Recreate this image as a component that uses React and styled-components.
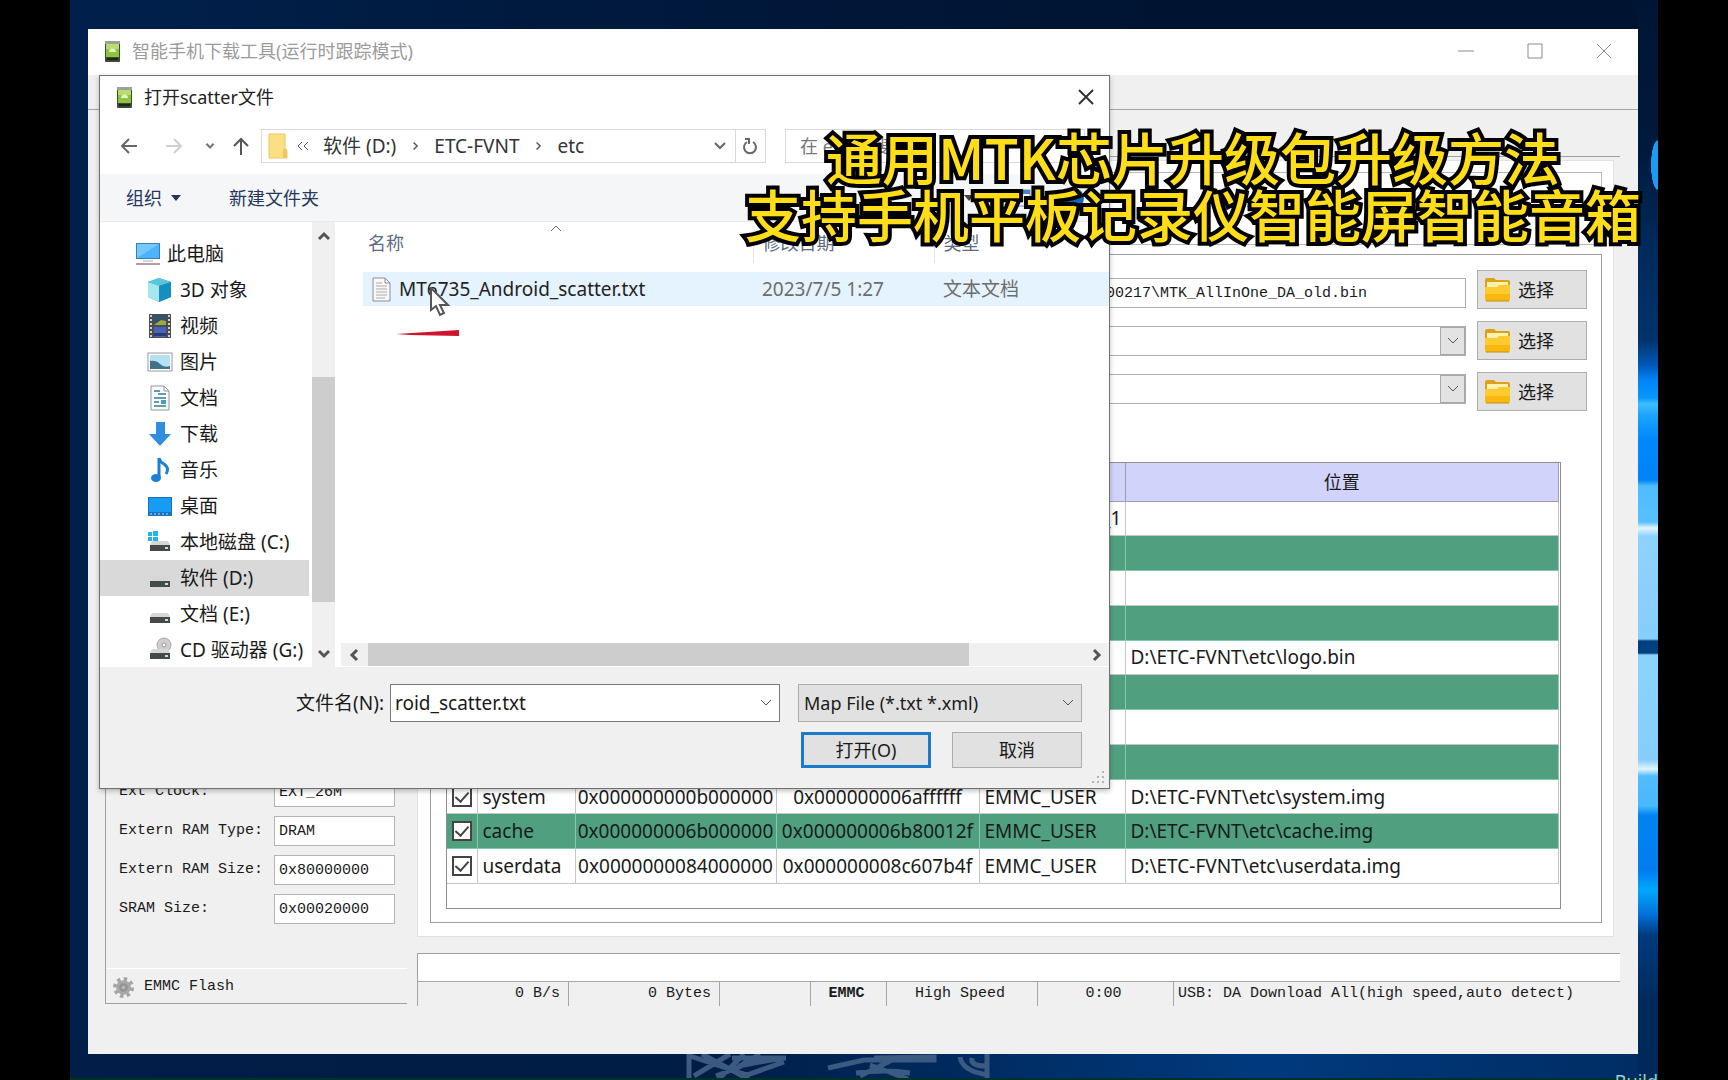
import styled, { createGlobalStyle } from "styled-components";

const GlobalStyle = createGlobalStyle`
  * {
    box-sizing: border-box;
  }
  body {
    margin: 0;
    background: #000;
    color: #1a1a1a;
    font-family: "Noto Sans", "Noto Sans CJK SC", sans-serif;
    font-size: 18px;
    line-height: 24px;
  }
  button, input, select {
    margin: 0;
    padding: 0;
    border: 0;
    border-radius: 0;
    outline: 0;
    background: none;
    color: inherit;
    font: inherit;
  }
  svg {
    display: block;
    flex: none;
  }
`;

const mono = `
  font-family: "Liberation Mono", "Noto Sans CJK SC", monospace;
  font-size: 15px;
`;

const Desktop = styled.div`
  position: relative;
  display: flex;
  height: 100vh;
  min-height: 1080px;
  margin: 0 70px;
  padding: 29px 20px 26px 18px;
  overflow: hidden;
  background:
    linear-gradient(#013226, #013226) bottom / 100% 2px no-repeat,
    radial-gradient(ellipse at right, #1a9cf4 68%, transparent 72%) right 140px / 7px 50px no-repeat,
    linear-gradient(
        #001533 0, #001a3d 150px, #002a5c 250px, #00336c 340px, #0058b8 365px,
        #0084f8 380px, #0a96ff 398px, #3cc0ff 404px, #1ca4ff 415px, #0088fb 440px,
        #0084f8 480px, #4fbcff 486px, #58c0ff 522px,
        #e4f6ff 528px, #8ed2ff 536px, #86ceff 639px, #003f82 641px, #003f82 653px,
        #8ad2ff 655px, #86ceff 760px, #e0f5ff 769px, #52bcff 776px, #48b8ff 806px,
        #0084f2 815px, #007cee 870px, #00a8ff 890px, #0070d8 915px, #003a80 935px,
        #002a5c 1000px, #00285a 1080px
      )
      right / 20px 100% no-repeat,
    linear-gradient(90deg, #021d47, #001d45 40%, #003a7e 75%, #002c62) bottom / 100% 40px no-repeat,
    linear-gradient(90deg, #00204c, #001a3e 30%, #001330 75%, #001330);
`;

const AppWindow = styled.main`
  position: relative;
  display: flex;
  flex: 1;
  flex-direction: column;
  background: #f0f0f0;
`;

const TitleBar = styled.header`
  display: flex;
  align-items: center;
  gap: 11px;
  height: ${(p) => (p.$dialog ? 44 : 46)}px;
  padding: 0 0 2px 16px;
  background: #fff;
  color: ${(p) => (p.$dialog ? "#222" : "#9b9b9b")};
`;

const TitleText = styled.h1`
  flex: 1;
  margin: 0;
  font-size: 18px;
  font-weight: 400;
`;

const CaptionButtons = styled.div`
  display: flex;
`;

const CaptionButton = styled.button`
  display: flex;
  justify-content: center;
  width: ${(p) => (p.$dialog ? 46 : 69)}px;
`;

const MenuBar = styled.div`
  height: 35px;
  border-bottom: 1px solid #a6a6a6;
`;

const Workspace = styled.div`
  display: grid;
  grid-template-columns: 302px 1fr;
  gap: 10px;
  flex: 1;
  padding: 46px 18px 50px 17px;
`;

const ChipPanel = styled.section`
  display: flex;
  flex-direction: column;
  justify-content: flex-end;
  border: solid #a0a0a0;
  border-width: 0 0 1px 1px;
  ${mono}
`;

const ChipFields = styled.div`
  display: flex;
  flex-direction: column;
  gap: 9px;
  padding: 0 12px 44px 13px;
`;

const ChipRow = styled.label`
  display: flex;
  align-items: center;
  justify-content: space-between;
  height: 30px;
`;

const ChipInput = styled.input`
  width: 121px;
  height: 30px;
  padding-left: 4px;
  border: 1px solid #b4b4b4;
  background: #fff;
`;

const FlashBar = styled.div`
  display: flex;
  align-items: center;
  gap: 10px;
  height: 35px;
  padding: 2px 0 0 7px;
  border-top: 1px solid #fff;
`;

const MainColumn = styled.div`
  display: flex;
  flex-direction: column;
  border-top: 1px solid #a0a0a0;
`;

const TabPanel = styled.section`
  display: flex;
  flex: 1;
  flex-direction: column;
  gap: 9px;
  margin: 3px 6px 16px 0;
  padding: 11px 11px 13px 12px;
  border: 1px solid #e2e2e2;
  background: #fff;
`;

const ActionGroup = styled.div`
  height: 73px;
  border: 1px solid #b8b8b8;
`;

const DownloadGroup = styled.div`
  display: flex;
  flex: 1;
  flex-direction: column;
  gap: 51px;
  padding: 15px 14px 13px 15px;
  border: 1px solid #a0a0a0;
`;

const FileFields = styled.div`
  display: flex;
  gap: 11px;
`;

const FieldColumn = styled.div`
  display: flex;
  flex: 1;
  flex-direction: column;
  gap: 18px;
  padding-top: 8px;
`;

const PathInput = styled.input`
  width: 100%;
  height: 30px;
  padding-right: 98px;
  border: 1px solid #acacac;
  text-align: right;
  ${mono}
`;

const Combo = styled.div`
  display: flex;
  align-items: center;
  height: 30px;
  border: 1px solid #acacac;

  select {
    flex: 1;
    appearance: none;
  }
`;

const ComboArrow = styled.span`
  display: flex;
  align-items: center;
  justify-content: center;
  width: 25px;
  height: 28px;
  border: 1px solid #a8a8a8;
  background: #e3e3e3;
`;

const ButtonColumn = styled.div`
  display: flex;
  flex-direction: column;
  gap: 12px;
  width: 110px;
`;

const ChooseButton = styled.button`
  display: flex;
  align-items: center;
  gap: 7px;
  height: 39px;
  padding-left: 6px;
  border: 1px solid #adadad;
  background: #e1e1e1;
`;

const TableFrame = styled.div`
  flex: 1;
  margin-right: 26px;
  padding-right: 1px;
  border: 1px solid #8e8e8e;
`;

const PartitionTable = styled.table`
  width: 100%;
  height: 421px;
  border-collapse: collapse;
  table-layout: fixed;
  font-size: 19px;
`;

const HeadCell = styled.th`
  width: ${(p) => (p.$w ? p.$w + "px" : "auto")};
  height: 38px;
  padding: 0;
  border: solid #9d9dae;
  border-width: 0 1px 1px 0;
  background: #d1d3fb;
  font-size: 18px;
  font-weight: 400;
`;

const Row = styled.tr`
  height: 34px;
  background: ${(p) => (p.$green ? "#50a080" : "#fff")};
`;

const Cell = styled.td`
  padding: ${(p) => (p.$center ? 0 : "0 0 0 5px")};
  border: solid ${(p) => (p.$green ? "#86c8ae" : "#c4c4c4")};
  border-width: 0 1px 1px 0;
  overflow: hidden;
  text-align: ${(p) => (p.$center ? "center" : "left")};
  white-space: nowrap;
`;

const Check = styled.input`
  display: block;
  width: 20px;
  height: 20px;
  margin: 0 auto;
  border: 2px solid #444;
  background: #fff;
  appearance: none;

  &:checked::after {
    content: "";
    display: block;
    width: 6px;
    height: 11px;
    margin: 0 auto;
    border: solid #444;
    border-width: 0 2px 2px 0;
    transform: rotate(42deg);
  }
`;

const ProgressBar = styled.div`
  height: 28px;
  border: solid #a0a0a0;
  border-width: 1px 0 0 1px;
  background: #fff;
`;

const StatusBar = styled.footer`
  display: grid;
  grid-template-columns: 151px 151px 91px 76px 151px 136px 1fr;
  height: 23px;
  ${mono}
`;

const StatusCell = styled.div`
  padding: 0 8px 0 4px;
  border: solid #a6a6a6;
  border-width: 1px 0 0 1px;
  text-align: ${(p) => p.$align || "center"};
  font-weight: ${(p) => (p.$bold ? 700 : 400)};
  white-space: nowrap;
`;

const Dialog = styled.section`
  position: absolute;
  top: 46px;
  left: 11px;
  width: calc(100% - 539px);
  border: 1px solid #707070;
  background: #fff;
  box-shadow: 0 2px 5px rgba(0, 0, 0, 0.25);
`;

const NavBar = styled.nav`
  display: flex;
  align-items: center;
  height: 54px;
  padding: 0 24px 2px 20px;
  color: #333;
  font-size: 19px;
`;

const NavButtons = styled.div`
  display: grid;
  grid-template-columns: 45px 40px 27px 29px;
`;

const AddressBar = styled.div`
  display: flex;
  flex: 1;
  align-items: center;
  height: 34px;
  padding-left: 6px;
  border: 1px solid #d9d9d9;
`;

const Crumbs = styled.div`
  display: flex;
  flex: 1;
  align-items: center;
  gap: 14px;
  padding-left: 9px;
`;

const RefreshButton = styled.button`
  display: flex;
  align-items: center;
  justify-content: center;
  width: 30px;
  height: 32px;
  margin-left: 8px;
  border-left: 1px solid #d9d9d9;
`;

const SearchInput = styled.input`
  width: 300px;
  height: 34px;
  margin-left: 19px;
  padding-left: 14px;
  border: 1px solid #d9d9d9;
  font-size: 18px;

  &::placeholder {
    color: #777;
    opacity: 1;
  }
`;

const Toolbar = styled.div`
  display: flex;
  align-items: center;
  height: 48px;
  padding: 0 24px 0 26px;
  border-bottom: 1px solid #eaeaea;
  background: #f5f6f7;
  color: #25375e;
`;

const ToolButton = styled.button`
  display: flex;
  align-items: center;
  gap: 9px;
  margin-right: 48px;
`;

const ViewTools = styled.div`
  display: flex;
  align-items: center;
  gap: 32px;
  margin-left: auto;
`;

const Browser = styled.div`
  display: grid;
  grid-template-columns: 212px 23px 1fr;
  height: 445px;
`;

const Tree = styled.ul`
  display: grid;
  grid-auto-rows: 36px;
  margin: 0;
  padding: 14px 3px 0 0;
  list-style: none;
  font-size: 19px;
  overflow: hidden;
`;

const TreeItem = styled.li`
  display: flex;
  align-items: center;
  gap: ${(p) => (p.$root ? 6 : 7)}px;
  padding-left: ${(p) => (p.$root ? 35 : 47)}px;
  background: ${(p) => (p.$active ? "#d9d9d9" : "transparent")};
  white-space: nowrap;
`;

const VScroll = styled.div`
  display: flex;
  flex-direction: column;
  align-items: center;
  padding: 8px 0 6px;
  background: #f0f0f0;
`;

const VThumb = styled.div`
  width: 23px;
  height: 225px;
  margin: 133px 0 auto;
  background: #cdcdcd;
`;

const FileArea = styled.div`
  display: flex;
  flex-direction: column;
  min-width: 0;
`;

const SortMark = styled.div`
  display: flex;
  justify-content: center;
  width: 442px;
  height: 9px;
`;

const FileTable = styled.table`
  width: calc(100% - 28px);
  margin: 0 0 auto 28px;
  border-collapse: collapse;
  table-layout: fixed;
  color: #6d6d6d;
  font-size: 19px;
`;

const FileHead = styled.th`
  width: ${(p) => (p.$w ? p.$w + "px" : "auto")};
  height: 30px;
  padding: 0 0 8px ${(p) => (p.$first ? 5 : 9)}px;
  border-right: ${(p) => (p.$last ? 0 : "1px solid #e5e5e5")};
  color: #5c6b83;
  font-size: 18px;
  font-weight: 400;
  text-align: left;
  vertical-align: middle;
`;

const FileCell = styled.td`
  height: 34px;
  padding: 0 0 0 9px;
  background: #e5f3ff;
  white-space: nowrap;
`;

const FileName = styled.span`
  display: flex;
  align-items: center;
  gap: 8px;
  color: #222;
`;

const TableGap = styled.tr`
  height: 9px;
`;

const HScroll = styled.div`
  display: flex;
  align-items: center;
  height: 23px;
  margin: 0 0 1px 6px;
  padding: 0 6px 0 7px;
  background: #f0f0f0;
`;

const HThumb = styled.div`
  flex: 1;
  height: 23px;
  margin: 0 120px 0 6px;
  background: #cdcdcd;
`;

const DialogFooter = styled.form`
  display: flex;
  flex-direction: column;
  gap: 10px;
  padding: 17px 27px 20px;
  background: #f0f0f0;
`;

const FooterRow = styled.div`
  display: flex;
  align-items: center;
  justify-content: flex-end;
  gap: ${(p) => p.$gap}px;
`;

const NameBox = styled.div`
  display: flex;
  align-items: center;
  width: 390px;
  height: 38px;
  margin-right: 12px;
  padding: 0 6px 0 4px;
  border: 1px solid #7a7a7a;
  background: #fff;

  input {
    flex: 1;
    min-width: 0;
    font-size: 19px;
  }
`;

const NameLabel = styled.label`
  font-size: 19px;
`;

const TypeBox = styled.div`
  display: flex;
  align-items: center;
  width: 284px;
  height: 38px;
  padding: 0 6px 0 5px;
  border: 1px solid #adadad;
  background: #e1e1e1;

  select {
    flex: 1;
    appearance: none;
  }
`;

const DialogButton = styled.button`
  width: 130px;
  height: 36px;
  border: ${(p) => (p.$primary ? "3px solid #1a79c8" : "1px solid #adadad")};
  background: #e1e1e1;
`;

const SizeGrip = styled.svg`
  position: absolute;
  right: 3px;
  bottom: 3px;
`;

const Pointer = styled.svg`
  position: absolute;
  top: 211px;
  left: 330px;
`;

const RedStroke = styled.svg`
  position: absolute;
  top: 253px;
  left: 296px;
`;

const Overlay = styled.p`
  position: absolute;
  top: 127px;
  right: 0;
  width: 930px;
  margin: 0;
  color: #ffde17;
  font-family: "Noto Sans CJK SC", sans-serif;
  font-size: 56px;
  font-weight: 500;
  line-height: 57px;
  text-align: center;
  white-space: nowrap;
  -webkit-text-stroke: 8px #000;
  paint-order: stroke fill;
  stroke-linejoin: round;
`;

const Watermark = styled.svg`
  position: absolute;
  bottom: 2px;
  left: 616px;
`;

const BuildLabel = styled.div`
  position: absolute;
  right: 0;
  bottom: -13px;
  color: #8fd0dc;
  font-size: 18px;
  line-height: 24px;
`;

const arrows = {
  down: "M2 4l5 5 5-5",
  up: "M2 9l5-5 5 5",
  left: "M9 2L4 7l5 5",
  right: "M5 2l5 5-5 5",
};

function Chevron({ dir = "down", size = 14, weight = 2, color = "#555" }) {
  return (
    <svg width={size} height={size} viewBox="0 0 14 14" fill="none" stroke={color} strokeWidth={weight}>
      <path d={arrows[dir]} />
    </svg>
  );
}

function PhoneIcon() {
  return (
    <svg width="17" height="21" viewBox="0 0 17 21">
      <rect x="1" width="15" height="21" rx="1" fill="#3c4a35" />
      <rect x="1" width="15" height="3" fill="#9aa39a" />
      <rect x="2" y="3" width="13" height="13" fill="#8cc63f" />
      <rect x="2" y="3" width="13" height="5" fill="#b7dd6e" />
      <path d="M5 11a3.500 3.500 0 0 1 7 0z" fill="#e4f5c4" />
      <rect x="3" y="17" width="11" height="2" fill="#1d241b" />
    </svg>
  );
}

function FolderIcon() {
  return (
    <svg width="27" height="26" viewBox="0 0 27 26">
      <path d="M1 3q0-2 2-2h7l2 2h12q2 0 2 2v10H1z" fill="#dda01a" />
      <path d="M3 5h21v6H3z" fill="#fff1b0" />
      <path d="M1 10h12l2-2h11v14q0 2-2 2H3q-2 0-2-2z" fill="#fdcb30" />
      <path d="M1 17h25v5q0 2-2 2H3q-2 0-2-2z" fill="#f9b80f" />
      <path d="M2 24h23" stroke="#c98f10" />
    </svg>
  );
}

function AddressFolder() {
  return (
    <svg width="20" height="26" viewBox="0 0 20 26">
      <path d="M1 1h16v15l2 2v7H1z" fill="#fbdf85" stroke="#edc75f" />
      <path d="M15 16h4v9h-4z" fill="#edc75f" />
    </svg>
  );
}

function GearIcon() {
  return (
    <svg width="21" height="21" viewBox="0 0 20 20">
      <circle cx="10" cy="10" r="8" fill="none" stroke="#a4a4a4" strokeWidth="4" strokeDasharray="3.140 3.140" />
      <circle cx="10" cy="10" r="7" fill="#a8a8a8" />
      <circle cx="10" cy="10" r="4" fill="#929292" />
      <circle cx="10" cy="10" r="2" fill="#b5b5b5" />
    </svg>
  );
}

function DocIcon() {
  return (
    <svg width="19" height="25" viewBox="0 0 19 25">
      <path d="M1 1h12l5 5v18H1z" fill="#f8f8f8" stroke="#8e8e8e" />
      <path d="M13 1v5h5" fill="none" stroke="#8e8e8e" />
      <path d="M4 6h6M4 9h11M4 12h11M4 15h11M4 18h11M4 21h9" stroke="#aaa" />
    </svg>
  );
}

const drive = (
  <>
    <path d="M5 12h16l2 4H3z" fill="#d6d6d6" />
    <path d="M3 16h20v6H3z" fill="#454a4a" />
    <path d="M18 19h3" stroke="#b9e8c9" strokeWidth="2" />
  </>
);

const treeIcons = {
  pc: (
    <>
      <rect x="1" y="2" width="24" height="16" fill="#3b7fae" />
      <rect x="2" y="3" width="22" height="14" fill="#4bb4fb" />
      <path d="M2 17L24 3H2z" fill="#74c8ff" />
      <path d="M8 20h10" stroke="#8fb4cc" />
      <path d="M1 23h24" stroke="#b89a9f" strokeWidth="2" />
    </>
  ),
  cube: (
    <>
      <path d="M1 5l11-4 12 4v15l-12 5L1 20z" fill="#25a3c9" />
      <path d="M1 5l11 3v17L1 20z" fill="#a5e6ef" />
      <path d="M1 5l11-4 12 4-12 4z" fill="#59c6dd" />
      <path d="M12 9l12-4v15l-12 5z" fill="#148fc0" />
    </>
  ),
  video: (
    <>
      <rect x="2" y="1" width="22" height="24" fill="#4c4c4c" />
      <path d="M4 2v22M22 2v22" stroke="#d0d0d0" strokeWidth="2" strokeDasharray="2 2" />
      <rect x="7" y="2" width="12" height="10" fill="#36506e" />
      <path d="M7 12l7-5 5 1v4z" fill="#a0a843" />
      <rect x="7" y="14" width="12" height="10" fill="#4565b6" />
      <path d="M7 20h12v3H7z" fill="#283a7a" />
    </>
  ),
  picture: (
    <>
      <rect x="1" y="4" width="24" height="18" fill="#fff" stroke="#9a9a9a" />
      <rect x="3" y="6" width="20" height="14" fill="#b7e0f5" />
      <path d="M3 12q6-1 10 3t10 2v3H3z" fill="#3f7389" />
    </>
  ),
  doc: (
    <>
      <path d="M4 1h13l5 5v19H4z" fill="#fafafa" stroke="#8b9a9f" />
      <path d="M17 1v5h5" fill="none" stroke="#8b9a9f" />
      <path d="M7 6h6M11 9h8M7 13h12M7 17h5M7 21h12" stroke="#5da1af" strokeWidth="2" />
      <path d="M14 15h5v4h-5z" fill="#4d9bb6" />
    </>
  ),
  download: <path d="M9 1h9v12h6L13 25 2 13h7z" fill="#318de0" />,
  music: (
    <>
      <ellipse cx="9" cy="21" rx="5" ry="4" fill="#1d7fd6" />
      <path d="M12 21V1q1 4 5 6 6 4 2 10" fill="none" stroke="#1d7fd6" strokeWidth="3" />
    </>
  ),
  desktop: (
    <>
      <rect x="1" y="4" width="24" height="19" fill="#1774bd" />
      <rect x="2" y="5" width="22" height="14" fill="#169cf5" />
      <path d="M3 21h20" stroke="#b8dcf3" strokeDasharray="2 2" />
    </>
  ),
  system: (
    <>
      <path d="M1 3h4v4H1zM6 2h5v5H6zM1 8h4v4H1zM6 8h5v5H6z" fill="#22b4e6" />
      {drive}
    </>
  ),
  drive,
  cd: (
    <>
      <circle cx="17" cy="8" r="7" fill="#cfcfcf" stroke="#a9a9a9" />
      <circle cx="17" cy="8" r="2" fill="#fff" stroke="#999" />
      {drive}
    </>
  ),
};

const treeItems = [
  { icon: "pc", label: "此电脑" },
  { icon: "cube", label: "3D 对象" },
  { icon: "video", label: "视频" },
  { icon: "picture", label: "图片" },
  { icon: "doc", label: "文档" },
  { icon: "download", label: "下载" },
  { icon: "music", label: "音乐" },
  { icon: "desktop", label: "桌面" },
  { icon: "system", label: "本地磁盘 (C:)" },
  { icon: "drive", label: "软件 (D:)", active: true },
  { icon: "drive", label: "文档 (E:)" },
  { icon: "cd", label: "CD 驱动器 (G:)" },
];

const partitions = [
  { region: "EMMC_BOOT_1" },
  {},
  {},
  {},
  { path: "D:\\ETC-FVNT\\etc\\logo.bin" },
  {},
  {},
  {},
  {
    name: "system",
    begin: "0x000000000b000000",
    end: "0x000000006affffff",
    region: "EMMC_USER",
    path: "D:\\ETC-FVNT\\etc\\system.img",
  },
  {
    name: "cache",
    begin: "0x000000006b000000",
    end: "0x000000006b80012f",
    region: "EMMC_USER",
    path: "D:\\ETC-FVNT\\etc\\cache.img",
  },
  {
    name: "userdata",
    begin: "0x0000000084000000",
    end: "0x000000008c607b4f",
    region: "EMMC_USER",
    path: "D:\\ETC-FVNT\\etc\\userdata.img",
  },
];

const chipInfo = [
  ["Ext Clock:", "EXT_26M"],
  ["Extern RAM Type:", "DRAM"],
  ["Extern RAM Size:", "0x80000000"],
  ["SRAM Size:", "0x00020000"],
];

const windowButtons = [
  ["最小化", "M0 8h16"],
  ["最大化", "M1 1h14v14H1z"],
  ["关闭", "M1 1l14 14M15 1L1 15"],
];

function Partitions() {
  return (
    <TableFrame>
      <PartitionTable>
        <thead>
          <tr>
            <HeadCell $w={30} />
            <HeadCell $w={98} />
            <HeadCell $w={201} />
            <HeadCell $w={203} />
            <HeadCell $w={146} />
            <HeadCell>位置</HeadCell>
          </tr>
        </thead>
        <tbody>
          {partitions.map((p, i) => {
            const green = i % 2 === 1;
            return (
              <Row key={i} $green={green}>
                <Cell $green={green} $center>
                  {p.name && <Check type="checkbox" aria-label={p.name} defaultChecked />}
                </Cell>
                <Cell $green={green}>{p.name}</Cell>
                <Cell $green={green} $center>{p.begin}</Cell>
                <Cell $green={green} $center>{p.end}</Cell>
                <Cell $green={green}>{p.region}</Cell>
                <Cell $green={green}>{p.path}</Cell>
              </Row>
            );
          })}
        </tbody>
      </PartitionTable>
    </TableFrame>
  );
}

function OpenDialog() {
  return (
    <Dialog role="dialog" aria-label="打开scatter文件">
      <TitleBar $dialog>
        <PhoneIcon />
        <TitleText as="h2">打开scatter文件</TitleText>
        <CaptionButton $dialog aria-label="关闭">
          <svg width="16" height="16" viewBox="0 0 16 16" stroke="#333" strokeWidth="2">
            <path d="M1 1l14 14M15 1L1 15" />
          </svg>
        </CaptionButton>
      </TitleBar>
      <NavBar>
        <NavButtons>
          <button aria-label="后退">
            <svg width="18" height="18" viewBox="0 0 18 18" fill="none" stroke="#666" strokeWidth="2">
              <path d="M17 9H2M9 2L2 9l7 7" />
            </svg>
          </button>
          <button aria-label="前进">
            <svg width="18" height="18" viewBox="0 0 18 18" fill="none" stroke="#d0d0d0" strokeWidth="2">
              <path d="M1 9h15M9 2l7 7-7 7" />
            </svg>
          </button>
          <button aria-label="最近位置">
            <Chevron size={10} weight={3} color="#777" />
          </button>
          <button aria-label="上移">
            <svg width="18" height="18" viewBox="0 0 18 18" fill="none" stroke="#555" strokeWidth="2">
              <path d="M9 18V2M2 9l7-7 7 7" />
            </svg>
          </button>
        </NavButtons>
        <AddressBar>
          <AddressFolder />
          <Crumbs>
            <svg width="12" height="10" viewBox="0 0 12 10" fill="none" stroke="#555">
              <path d="M5 1L1 5l4 4M11 1L7 5l4 4" />
            </svg>
            <button>软件 (D:)</button>
            <Chevron dir="right" size={10} weight={2} color="#555" />
            <button>ETC-FVNT</button>
            <Chevron dir="right" size={10} weight={2} color="#555" />
            <button>etc</button>
          </Crumbs>
          <Chevron color="#666" />
          <RefreshButton aria-label="刷新">
            <svg width="17" height="18" viewBox="0 0 17 18" fill="none" stroke="#666" strokeWidth="2">
              <path d="M11 5a6 6 0 1 1-6 0" />
              <path d="M3 2h4v5" />
            </svg>
          </RefreshButton>
        </AddressBar>
        <SearchInput aria-label="搜索" placeholder="在 etc 中搜索" />
      </NavBar>
      <Toolbar>
        <ToolButton>
          组织
          <svg width="10" height="6" viewBox="0 0 10 6">
            <path d="M0 0h10L5 6z" fill="#25375e" />
          </svg>
        </ToolButton>
        <ToolButton>新建文件夹</ToolButton>
        <ViewTools>
          <svg width="10" height="6" viewBox="0 0 10 6">
            <path d="M0 0h10L5 6z" fill="#444" />
          </svg>
          <svg width="25" height="18" viewBox="0 0 25 18">
            <rect x="1" y="1" width="23" height="16" fill="#fff" stroke="#6b8fb5" />
            <path d="M1 1h23v4H1z" fill="#4b84c4" />
          </svg>
          <svg width="22" height="22" viewBox="0 0 22 22">
            <circle cx="11" cy="11" r="10" fill="#1467b8" />
          </svg>
        </ViewTools>
      </Toolbar>
      <Browser>
        <Tree>
          {treeItems.map((item) => (
            <TreeItem key={item.label} $root={item.icon === "pc"} $active={item.active}>
              <svg width="26" height="26" viewBox="0 0 26 26">
                {treeIcons[item.icon]}
              </svg>
              {item.label}
            </TreeItem>
          ))}
        </Tree>
        <VScroll>
          <Chevron dir="up" weight={3} />
          <VThumb />
          <Chevron weight={3} />
        </VScroll>
        <FileArea>
          <SortMark>
            <Chevron dir="up" weight={1} color="#666" />
          </SortMark>
          <FileTable>
            <thead>
              <tr>
                <FileHead $w={390} $first>名称</FileHead>
                <FileHead $w={181}>修改日期</FileHead>
                <FileHead $last>类型</FileHead>
              </tr>
            </thead>
            <tbody>
              <TableGap />
              <tr>
                <FileCell>
                  <FileName>
                    <DocIcon />
                    MT6735_Android_scatter.txt
                  </FileName>
                </FileCell>
                <FileCell>2023/7/5 1:27</FileCell>
                <FileCell>文本文档</FileCell>
              </tr>
            </tbody>
          </FileTable>
          <HScroll>
            <Chevron dir="left" weight={3} />
            <HThumb />
            <Chevron dir="right" weight={3} />
          </HScroll>
        </FileArea>
      </Browser>
      <DialogFooter>
        <FooterRow $gap={6}>
          <NameLabel htmlFor="file-name">文件名(N):</NameLabel>
          <NameBox>
            <input id="file-name" defaultValue="roid_scatter.txt" />
            <Chevron weight={1} />
          </NameBox>
          <TypeBox>
            <select aria-label="文件类型">
              <option>Map File (*.txt *.xml)</option>
            </select>
            <Chevron weight={1} />
          </TypeBox>
        </FooterRow>
        <FooterRow $gap={21}>
          <DialogButton type="button" $primary>打开(O)</DialogButton>
          <DialogButton type="button">取消</DialogButton>
        </FooterRow>
      </DialogFooter>
      <SizeGrip width="14" height="14" viewBox="0 0 14 14" fill="#b5b5b5">
        <path d="M10 0h2v2h-2zM5 5h2v2H5zM10 5h2v2h-2zM0 10h2v2H0zM5 10h2v2H5zM10 10h2v2h-2z" />
      </SizeGrip>
      <Pointer width="20" height="30" viewBox="0 0 20 30">
        <path d="M1 1v22l5-4 4 9 4-2-4-8h8z" fill="#fff" stroke="#555" strokeWidth="2" />
      </Pointer>
      <RedStroke width="64" height="8" viewBox="0 0 64 8">
        <path d="M0 5L63 1v6L14 6z" fill="#cf1430" />
      </RedStroke>
    </Dialog>
  );
}

export default function App() {
  return (
    <>
      <GlobalStyle />
      <Desktop>
        <AppWindow>
          <TitleBar>
            <PhoneIcon />
            <TitleText>智能手机下载工具(运行时跟踪模式)</TitleText>
            <CaptionButtons>
              {windowButtons.map(([label, d]) => (
                <CaptionButton key={label} aria-label={label}>
                  <svg width="16" height="16" viewBox="0 0 16 16" fill="none" stroke="#8b8b8b">
                    <path d={d} />
                  </svg>
                </CaptionButton>
              ))}
            </CaptionButtons>
          </TitleBar>
          <MenuBar />
          <Workspace>
            <ChipPanel>
              <ChipFields>
                {chipInfo.map(([label, value]) => (
                  <ChipRow key={label}>
                    {label}
                    <ChipInput defaultValue={value} />
                  </ChipRow>
                ))}
              </ChipFields>
              <FlashBar>
                <GearIcon />
                EMMC Flash
              </FlashBar>
            </ChipPanel>
            <MainColumn>
              <TabPanel>
                <ActionGroup />
                <DownloadGroup>
                  <FileFields>
                    <FieldColumn>
                      <PathInput aria-label="Download-Agent" defaultValue="00217\MTK_AllInOne_DA_old.bin" />
                      {["scatter", "auth"].map((name) => (
                        <Combo key={name}>
                          <select aria-label={name} />
                          <ComboArrow>
                            <Chevron weight={1} />
                          </ComboArrow>
                        </Combo>
                      ))}
                    </FieldColumn>
                    <ButtonColumn>
                      {[1, 2, 3].map((n) => (
                        <ChooseButton key={n}>
                          <FolderIcon />
                          选择
                        </ChooseButton>
                      ))}
                    </ButtonColumn>
                  </FileFields>
                  <Partitions />
                </DownloadGroup>
              </TabPanel>
              <ProgressBar />
              <StatusBar>
                <StatusCell $align="right">0 B/s</StatusCell>
                <StatusCell $align="right">0 Bytes</StatusCell>
                <StatusCell />
                <StatusCell $bold>EMMC</StatusCell>
                <StatusCell>High Speed</StatusCell>
                <StatusCell>0:00</StatusCell>
                <StatusCell $align="left">USB: DA Download All(high speed,auto detect)</StatusCell>
              </StatusBar>
            </MainColumn>
          </Workspace>
          <OpenDialog />
        </AppWindow>
        <Watermark width="304" height="24" viewBox="0 0 304 24" fill="none" stroke="#3a5a82" strokeWidth="5">
          <path d="M3 0v24M4 2l60 20M16 0l44 24M8 22L44 0M30 22L76 4M46 4h54M52 12l44-8M58 22l40-14M58 0l-24 24M74 0L54 12" />
          <path d="M142 14l36-8h70v-3l-60 1M170 19q30-4 54 0M206 6l-32 16M184 11l38 14M274 3q2 14 28 18M286 4q-2 8 14 8M301 0v24" />
        </Watermark>
        <BuildLabel>Build</BuildLabel>
        <Overlay>
          通用MTK芯片升级包升级方法
          <br />
          支持手机平板记录仪智能屏智能音箱
        </Overlay>
      </Desktop>
    </>
  );
}
